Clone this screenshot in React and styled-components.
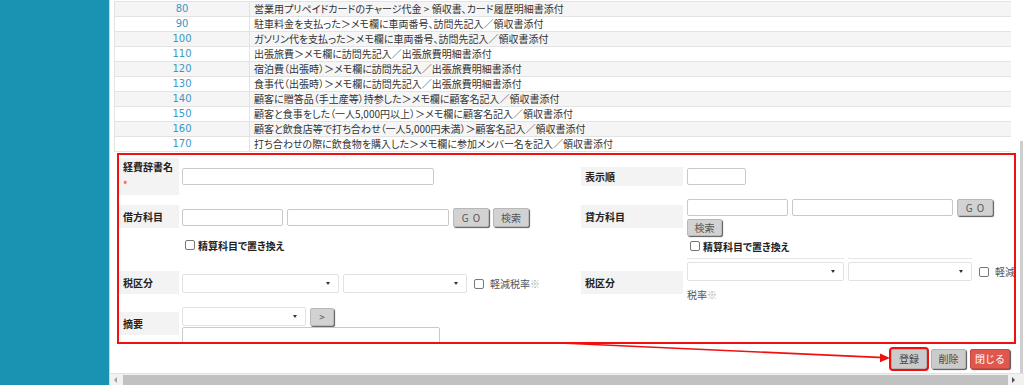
import React from 'react'
import styled, { createGlobalStyle } from 'styled-components'

const rows = [
  ['80', '営業用プリペイドカードのチャージ代金 > 領収書、カード履歴明細書添付'],
  ['90', '駐車料金を支払った＞メモ欄に車両番号、訪問先記入／領収書添付'],
  ['100', 'ガソリン代を支払った＞メモ欄に車両番号、訪問先記入／領収書添付'],
  ['110', '出張旅費＞メモ欄に訪問先記入／出張旅費明細書添付'],
  ['120', '宿泊費（出張時）＞メモ欄に訪問先記入／出張旅費明細書添付'],
  ['130', '食事代（出張時）＞メモ欄に訪問先記入／出張旅費明細書添付'],
  ['140', '顧客に贈答品（手土産等）持参した＞メモ欄に顧客名記入／領収書添付'],
  ['150', '顧客と食事をした（一人5,000円以上）＞メモ欄に顧客名記入／領収書添付'],
  ['160', '顧客と飲食店等で打ち合わせ（一人5,000円未満）＞顧客名記入／領収書添付'],
  ['170', '打ち合わせの際に飲食物を購入した＞メモ欄に参加メンバー名を記入／領収書添付'],
]

const Select = ({ w }) => (
  <SelectBox $w={w}>
    <Caret />
  </SelectBox>
)

const Check = ({ children, pl = 3 }) => (
  <CheckLine $pl={pl}>
    <Box />
    <span>{children}</span>
  </CheckLine>
)

const App = () => {
  return (
    <>
      <GlobalStyle />
      <Page>
        <Sidebar />
        <Main>
          <Viewport>
            <Content>
              <Table>
                {rows.map(([no, text], i) => (
                  <Row key={no} $odd={i % 2 === 0}>
                    <NumCell>{no}</NumCell>
                    <DescCell>{text}</DescCell>
                  </Row>
                ))}
              </Table>

              <FormBox>
                <Pane $w={462}>
                  <FieldRow $mt={3} $align="center">
                    <Label $w={60} $h={37} $col>
                      <span>経費辞書名</span>
                      <Required>*</Required>
                    </Label>
                    <Field $ml={3}>
                      <Input $w={252} />
                    </Field>
                  </FieldRow>

                  <FieldRow $mt={10}>
                    <Label $w={60} $h={23}>借方科目</Label>
                    <Field $ml={3} $mt={3}>
                      <Line $h={19} $gap={4}>
                        <Input $w={101} />
                        <Input $w={162} />
                        <Btn $w={36} $h={19} $ls={4}>GO</Btn>
                        <Btn $w={36} $h={19}>検索</Btn>
                      </Line>
                      <Gap $h={12} />
                      <Check>精算科目で置き換え</Check>
                    </Field>
                  </FieldRow>

                  <FieldRow $mt={20}>
                    <Label $w={60} $h={23}>税区分</Label>
                    <Field $ml={3} $mt={3}>
                      <Line $h={19} $gap={4}>
                        <Select w={157} />
                        <Select w={124} />
                        <Plain $ml={3}>
                          <Box />
                          <PlainText>軽減税率<Note>※</Note></PlainText>
                        </Plain>
                      </Line>
                    </Field>
                  </FieldRow>

                  <FieldRow $mt={13}>
                    <Label $w={60} $h={23} $mt={5}>摘要</Label>
                    <Field $ml={3}>
                      <Line $h={19} $gap={4}>
                        <Select w={124} />
                        <Btn $w={24} $h={18}>&gt;</Btn>
                      </Line>
                      <Gap $h={1} />
                      <TextArea />
                    </Field>
                  </FieldRow>
                </Pane>

                <Pane>
                  <FieldRow $mt={12} $align="center">
                    <Label $w={102} $h={19}>表示順</Label>
                    <Field $ml={4}>
                      <Input $w={59} />
                    </Field>
                  </FieldRow>

                  <FieldRow $mt={13}>
                    <Label $w={102} $h={23} $mt={6}>貸方科目</Label>
                    <Field $ml={4}>
                      <Line $h={17} $gap={4}>
                        <Input $w={101} />
                        <Input $w={161} />
                        <Btn $w={36} $h={17} $ls={4}>GO</Btn>
                      </Line>
                      <Gap $h={3} />
                      <Btn $w={35} $h={17}>検索</Btn>
                      <Gap $h={4} />
                      <Check>精算科目で置き換え</Check>
                    </Field>
                  </FieldRow>

                  <FieldRow $mt={6}>
                    <Label $w={102} $h={23} $mt={13}>税区分</Label>
                    <Field $ml={4}>
                      <Line $h={1} $gap={4}>
                        <Rule $w={157} />
                        <Rule $w={124} />
                      </Line>
                      <Gap $h={3} />
                      <Line $h={19} $gap={4}>
                        <Select w={157} />
                        <Select w={124} />
                        <Plain $ml={3}>
                          <Box />
                          <PlainText>軽減</PlainText>
                        </Plain>
                      </Line>
                      <Gap $h={8} />
                      <PlainText>税率<Note>※</Note></PlainText>
                    </Field>
                  </FieldRow>
                </Pane>
              </FormBox>

              <ButtonBar>
                <ActionBtn $w={36} $marked>登録</ActionBtn>
                <ActionBtn $w={35}>削除</ActionBtn>
                <ActionBtn $w={40} $danger>閉じる</ActionBtn>
              </ButtonBar>
            </Content>
            <VScroll>
              <VThumb />
            </VScroll>
          </Viewport>
          <HScroll>
            <ArrowCell $w={13}><ArrowLeft /></ArrowCell>
            <HThumb />
            <ArrowCell $w={16}><ArrowRight /></ArrowCell>
          </HScroll>
        </Main>

        <Callout viewBox="0 0 1024 385" width="1024" height="385">
          <path d="M560 343 L884 357.6" stroke="#f01010" strokeWidth="1.6" fill="none" />
          <path d="M890 358 L880 353.5 L880 362.3 Z" fill="#f01010" />
        </Callout>
      </Page>
    </>
  )
}

export default App

const GlobalStyle = createGlobalStyle`
  html, body {
    margin: 0;
    padding: 0;
    width: 1024px;
    height: 385px;
    overflow: hidden;
    background: #fff;
  }
  body {
    font-family: "Noto Sans CJK JP", "Noto Sans", sans-serif;
    color: #333;
  }
  * { box-sizing: border-box; }
`

const Page = styled.div`
  position: relative;
  display: flex;
  width: 1024px;
  height: 385px;
`

const Sidebar = styled.div`
  width: 109px;
  flex-shrink: 0;
  background: #1a93b3;
`

const Main = styled.div`
  flex: 1;
  min-width: 0;
  display: flex;
  flex-direction: column;
  border-left: 1px solid #d6d6d6;
`

const Viewport = styled.div`
  flex: 1;
  min-height: 0;
  display: flex;
`

const Content = styled.div`
  flex: 1;
  min-width: 0;
  padding: 0 1px 0 4px;
  overflow: hidden;
`

const Table = styled.div`
  margin: 1px 5px 0 0;
  border-top: 1px solid #e3e3e3;
  border-left: 1px solid #e3e3e3;
`

const Row = styled.div`
  display: flex;
  height: 15px;
  border-bottom: 1px solid #e3e3e3;
  background: ${p => (p.$odd ? '#f5f5f5' : '#fff')};
`

const NumCell = styled.div`
  width: 135px;
  flex-shrink: 0;
  border-right: 1px solid #e3e3e3;
  text-align: center;
  font-family: "DejaVu Sans", Verdana, sans-serif;
  font-size: 10px;
  line-height: 14px;
  color: #3b98c6;
`

const DescCell = styled.div`
  padding-left: 4px;
  font-size: 10px;
  line-height: 14px;
  color: #333;
  white-space: nowrap;
  overflow: hidden;
  font-feature-settings: "palt";
`

const FormBox = styled.div`
  display: flex;
  height: 191px;
  margin: 1px 0 0 3px;
  border: 2px solid #f01010;
  overflow: hidden;
`

const Pane = styled.div`
  display: flex;
  flex-direction: column;
  ${p => (p.$w ? `width: ${p.$w}px;` : 'flex: 1;')}
  flex-shrink: 0;
`

const FieldRow = styled.div`
  display: flex;
  align-items: ${p => p.$align || 'flex-start'};
  margin-top: ${p => p.$mt || 0}px;
`

const Label = styled.div`
  width: ${p => p.$w}px;
  height: ${p => p.$h}px;
  margin-top: ${p => p.$mt || 0}px;
  flex-shrink: 0;
  display: flex;
  flex-direction: ${p => (p.$col ? 'column' : 'row')};
  align-items: ${p => (p.$col ? 'flex-start' : 'center')};
  padding-left: 4px;
  background: #f3f3f3;
  font-size: 10px;
  line-height: 18px;
  font-weight: 700;
  color: #222;
  font-feature-settings: "palt";
`

const Required = styled.span`
  color: #ff4a4a;
  font-size: 9px;
  line-height: 18px;
`

const Field = styled.div`
  display: flex;
  flex-direction: column;
  align-items: flex-start;
  margin-left: ${p => p.$ml || 0}px;
  margin-top: ${p => p.$mt || 0}px;
`

const Line = styled.div`
  display: flex;
  align-items: center;
  height: ${p => p.$h}px;
  gap: ${p => p.$gap || 0}px;
`

const Gap = styled.div`
  height: ${p => p.$h}px;
`

const Input = styled.div`
  width: ${p => p.$w}px;
  height: 17px;
  background: #fff;
  border: 1px solid #c9c9c9;
  border-radius: 2px;
`

const Rule = styled.div`
  width: ${p => p.$w}px;
  height: 1px;
  background: #e6e6e6;
`

const TextArea = styled.div`
  width: 258px;
  height: 30px;
  background: #fff;
  border: 1px solid #c9c9c9;
  border-radius: 2px;
`

const SelectBox = styled.div`
  width: ${p => p.$w}px;
  height: 19px;
  display: flex;
  align-items: center;
  justify-content: flex-end;
  padding-right: 8px;
  background: #fff;
  border: 1px solid #e2e2e2;
  border-radius: 2px;
`

const Caret = styled.span`
  width: 0;
  height: 0;
  border-left: 2.5px solid transparent;
  border-right: 2.5px solid transparent;
  border-top: 3px solid #333;
`

const Btn = styled.button`
  width: ${p => p.$w}px;
  height: ${p => p.$h}px;
  padding: 0 0 0 ${p => p.$ls || 0}px;
  background: #d2d2d2;
  border: 1px solid #b8b8b8;
  border-radius: 2px;
  box-shadow: 1px 1px 1px #5a5a5a;
  font-family: "Noto Sans CJK JP", sans-serif;
  font-size: 10px;
  line-height: 1;
  letter-spacing: ${p => p.$ls || 0}px;
  color: #555;
`

const CheckLine = styled.div`
  display: flex;
  align-items: center;
  height: 12px;
  gap: 3px;
  padding-left: ${p => p.$pl}px;
  font-size: 10px;
  font-weight: 700;
  color: #222;
  font-feature-settings: "palt";
`

const Box = styled.span`
  width: 10px;
  height: 10px;
  border: 1px solid #777;
  border-radius: 2px;
  background: #fff;
  flex-shrink: 0;
`

const Plain = styled.div`
  display: flex;
  align-items: center;
  gap: 6px;
  margin-left: ${p => p.$ml || 0}px;
`

const PlainText = styled.span`
  font-size: 10px;
  line-height: 12px;
  color: #555;
  white-space: nowrap;
  font-feature-settings: "palt";
`

const Note = styled.span`
  color: #aaa;
`

const ButtonBar = styled.div`
  display: flex;
  justify-content: flex-end;
  gap: 4px;
  margin-top: 5px;
  padding-right: 6px;
`

const ActionBtn = styled.button`
  width: ${p => p.$w}px;
  height: 20px;
  padding: 0;
  background: ${p => (p.$danger ? '#e0574d' : '#cbcbcb')};
  border: 1px solid ${p => (p.$danger ? '#c9483f' : '#b3b3b3')};
  border-radius: 2px;
  box-shadow: 1px 1px 1px #555;
  outline: ${p => (p.$marked ? '2px solid #f01010' : 'none')};
  font-family: "Noto Sans CJK JP", sans-serif;
  font-size: 10px;
  line-height: 1;
  color: ${p => (p.$danger ? '#fff' : '#444')};
`

const VScroll = styled.div`
  width: 7px;
  flex-shrink: 0;
  display: flex;
  flex-direction: column;
  justify-content: flex-end;
  align-items: flex-end;
  background: #fff;
`

const VThumb = styled.div`
  width: 3px;
  height: 232px;
  margin-right: 1px;
  background: #cfcfcf;
`

const HScroll = styled.div`
  display: flex;
  height: 12px;
  flex-shrink: 0;
  background: #f1f1f1;
  border-top: 1px solid #e2e2e2;
`

const ArrowCell = styled.div`
  width: ${p => p.$w}px;
  display: flex;
  align-items: center;
  padding-left: 4px;
`

const HThumb = styled.div`
  flex: 1;
  margin-top: 1px;
  background: #c1c1c1;
`

const ArrowLeft = styled.span`
  width: 0;
  height: 0;
  border-top: 3px solid transparent;
  border-bottom: 3px solid transparent;
  border-right: 3px solid #a0a0a0;
`

const ArrowRight = styled.span`
  width: 0;
  height: 0;
  border-top: 3px solid transparent;
  border-bottom: 3px solid transparent;
  border-left: 3px solid #505050;
`

const Callout = styled.svg`
  position: absolute;
  left: 0;
  top: 0;
  pointer-events: none;
`
